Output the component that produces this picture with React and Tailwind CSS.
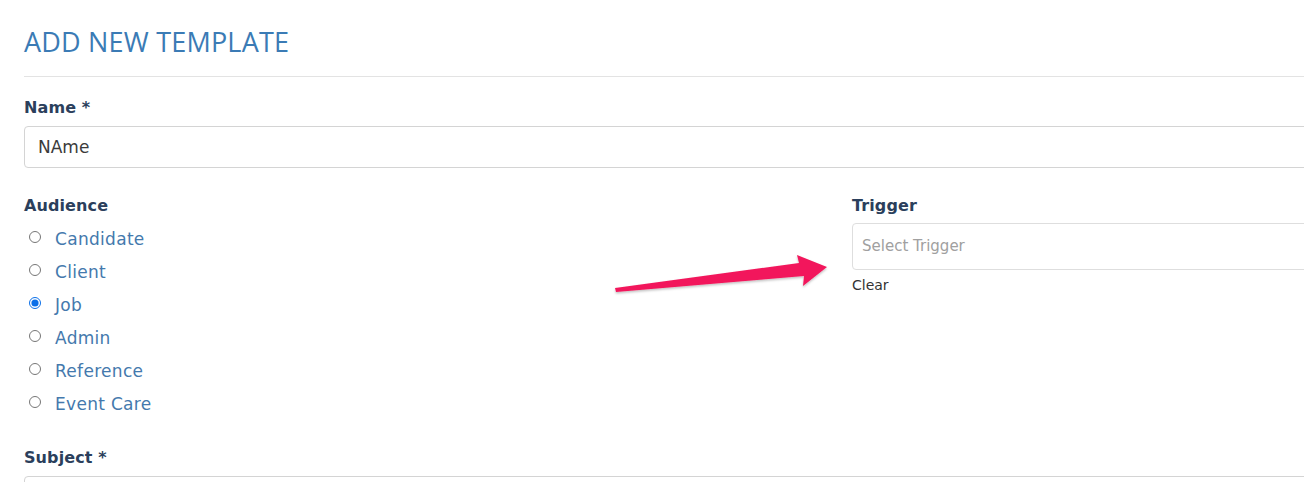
import { useState } from 'react';

const audiences = ['Candidate', 'Client', 'Job', 'Admin', 'Reference', 'Event Care'];

function Label({ children }) {
  return (
    <label className="block text-[16px] font-bold leading-[22px] tracking-[0.1px] text-[#2b3f5c]">
      {children}
    </label>
  );
}

export default function App() {
  const [audience, setAudience] = useState('Job');
  const [name, setName] = useState('NAme');

  return (
    <div className="w-[1304px] h-[482px] overflow-hidden bg-white font-['DejaVu_Sans',sans-serif]">
      <div className="w-[1700px] pl-6 relative">
        <h1 className="mt-[24px] pb-[17px] border-b border-[#e3e3e3] font-['Open_Sans',sans-serif] text-[27px] leading-[35px] text-[#3b7bb5] tracking-[0.2px]">
          ADD NEW TEMPLATE
        </h1>

        <div className="mt-[20px]">
          <Label>Name *</Label>
          <input
            value={name}
            onChange={(e) => setName(e.target.value)}
            className="mt-[7px] w-full h-[42px] px-[13px] border border-[#d4d4d4] rounded-[4px] text-[17px] text-[#3b3b3b] outline-none"
          />
        </div>

        <div className="mt-[27px] grid grid-cols-[798px_1fr] gap-[30px]">
          <div>
            <Label>Audience</Label>
            <div className="mt-[6px]">
              {audiences.map((a) => (
                <label key={a} className="flex items-center h-[33px] cursor-pointer">
                  <input
                    type="radio"
                    name="audience"
                    checked={audience === a}
                    onChange={() => setAudience(a)}
                    className="m-0 ml-[5px] w-[12px] h-[12px] -mt-[6px] accent-[#0b6fe8]"
                  />
                  <span className="ml-[14px] text-[17px] text-[#4479ad] tracking-[0.3px]">{a}</span>
                </label>
              ))}
            </div>
          </div>

          <div>
            <Label>Trigger</Label>
            <div className="mt-[6px] h-[47px] border border-[#dedede] rounded-[4px] flex items-center px-[9px] text-[15px] text-[#a0a0a0]">
              Select Trigger
            </div>
            <div className="mt-[5px] text-[14px] text-[#333]">Clear</div>
          </div>
        </div>

        <div className="mt-[26px]">
          <Label>Subject *</Label>
          <input className="mt-[7px] w-full h-[42px] border border-[#d4d4d4] rounded-[4px] outline-none" />
        </div>

        <svg
          className="absolute left-[600px] top-[220px] pointer-events-none"
          width="240"
          height="60"
          viewBox="600 220 240 60"
        >
          <defs>
            <filter id="sh" x="-10%" y="-50%" width="120%" height="200%">
              <feDropShadow dx="0" dy="1.5" stdDeviation="1.2" floodColor="#000" floodOpacity="0.25" />
            </filter>
          </defs>
          <polygon
            points="615,264 799,239 797,231 827,243 803,262 804,252 616,268"
            fill="#f2185b"
            filter="url(#sh)"
          />
        </svg>
      </div>
    </div>
  );
}
